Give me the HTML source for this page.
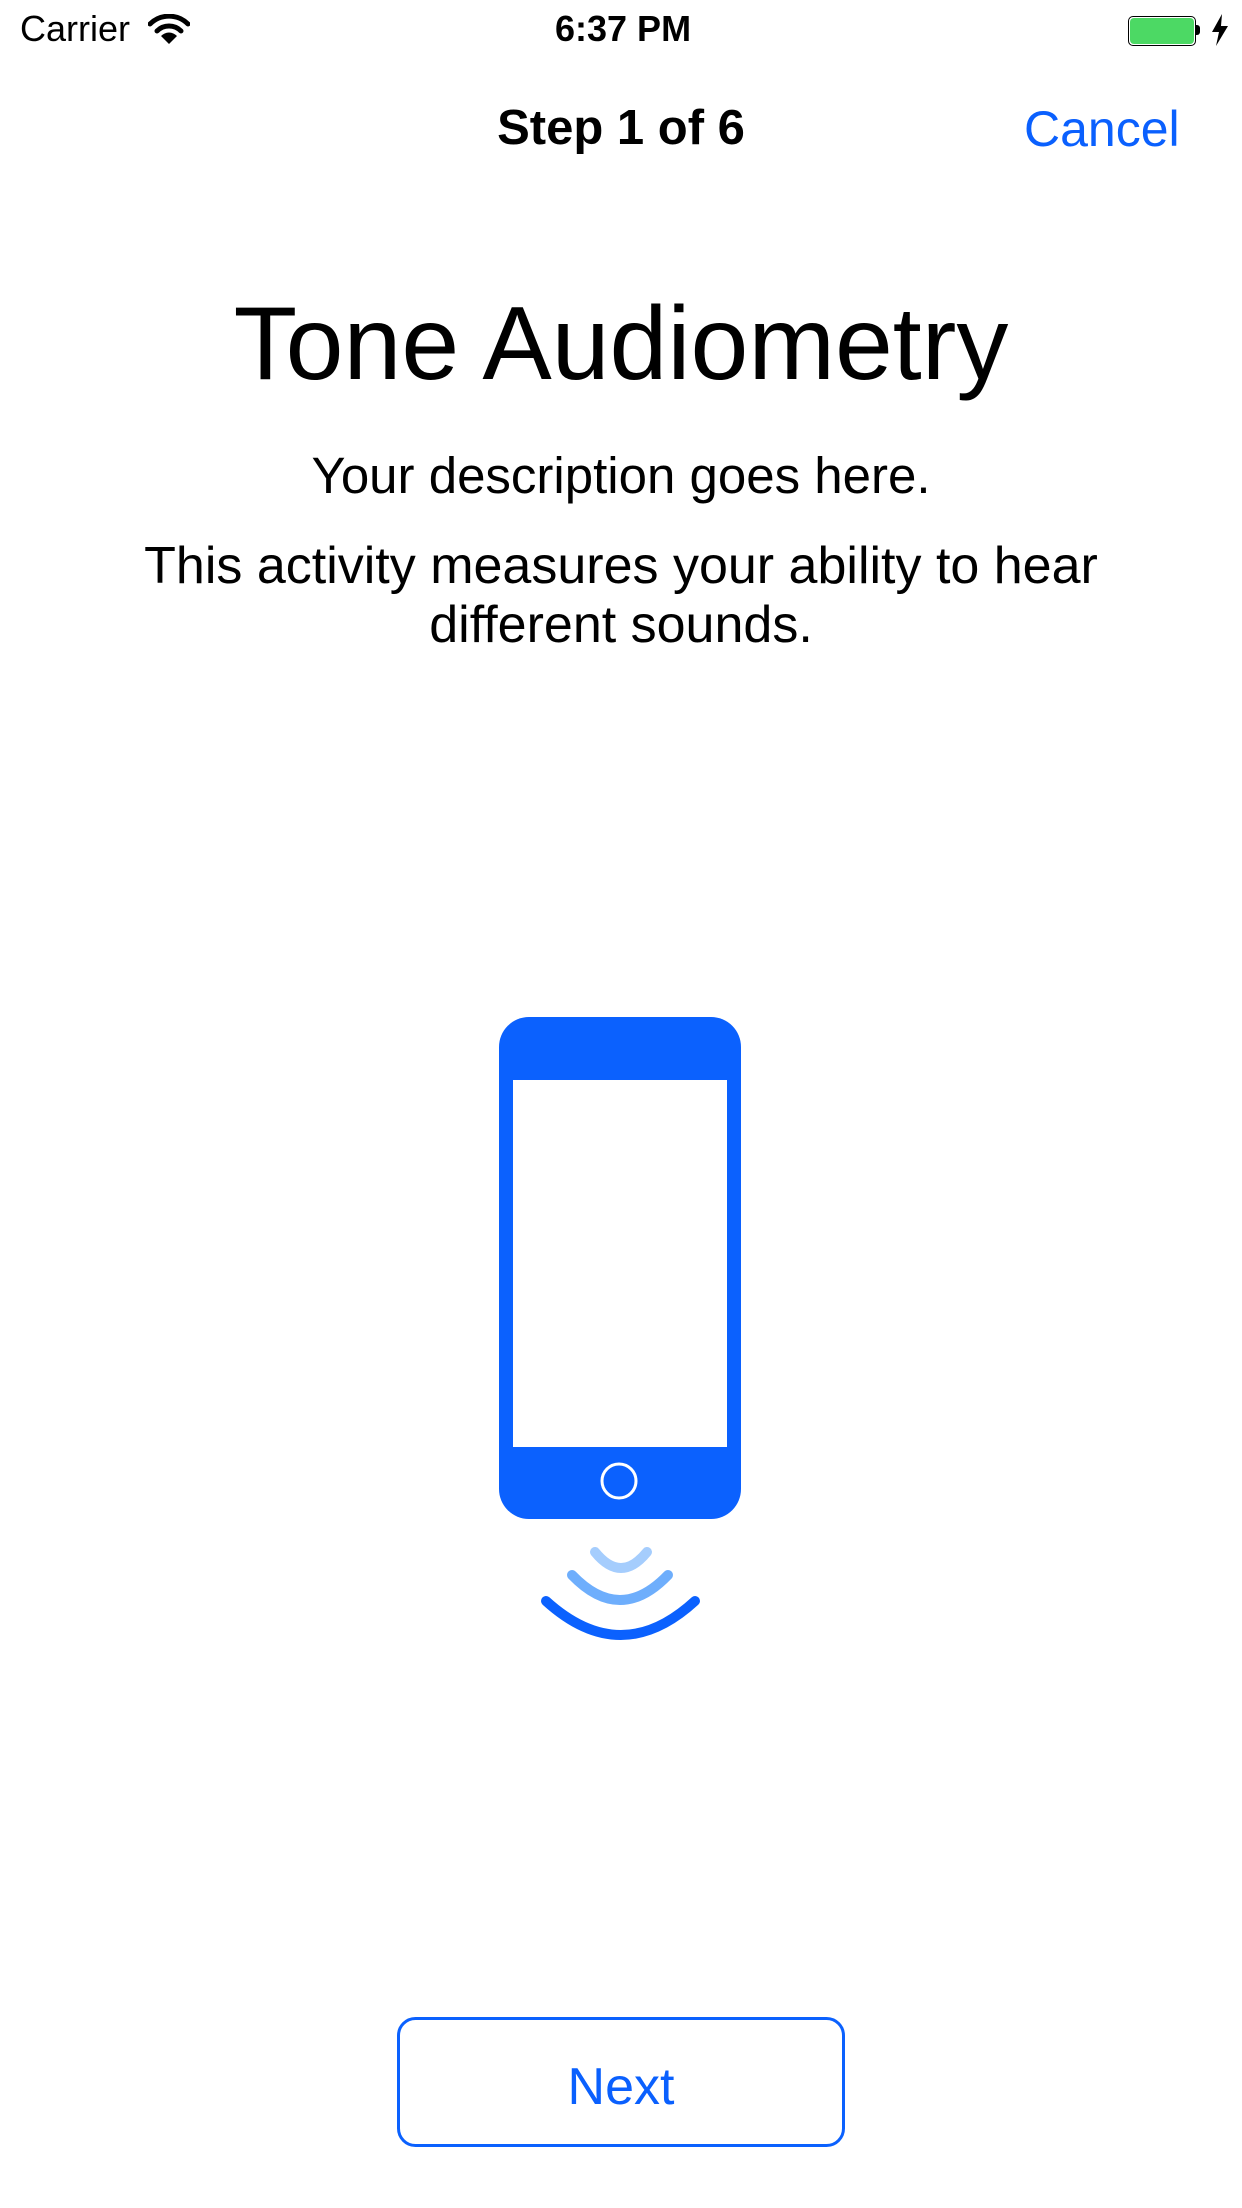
<!DOCTYPE html>
<html><head><meta charset="utf-8"><style>
html,body{margin:0;padding:0;background:#fff;}
body{width:1242px;height:2208px;position:relative;overflow:hidden;font-family:"Liberation Sans",sans-serif;color:#000;}
.t{position:absolute;white-space:nowrap;line-height:1;}
</style></head><body>
<div class="t" style="left:20px;top:11px;font-size:36px;">Carrier</div>
<svg style="position:absolute;left:148px;top:14px" width="42" height="32" viewBox="0 0 42 32">
<path d="M2 10 A27 27 0 0 1 40 10" stroke="#000" stroke-width="5" fill="none" stroke-linecap="round"/>
<path d="M9 17 A17 17 0 0 1 33 17" stroke="#000" stroke-width="5" fill="none" stroke-linecap="round"/>
<path d="M13 22 L21 30 L29 22 A11 11 0 0 0 13 22 Z" fill="#000"/>
</svg>
<div class="t" style="left:555px;top:11px;font-size:36px;font-weight:bold;">6:37 PM</div>
<div style="position:absolute;left:1128px;top:16px;width:64px;height:26px;border:1px solid #000;border-radius:5px;padding:1px;box-sizing:content-box;">
<div style="width:64px;height:26px;background:#4cd964;border-radius:4px;"></div></div>
<div style="position:absolute;left:1196px;top:25px;width:4px;height:10px;background:#000;border-radius:0 3px 3px 0;"></div>
<svg style="position:absolute;left:1210px;top:14px" width="20" height="32" viewBox="0 0 20 32"><path d="M12 0 L2 18 L9 18 L6 32 L18 12 L11 12 Z" fill="#000"/></svg>
<div class="t" style="left:0;width:1242px;text-align:center;top:104px;font-size:49px;font-weight:bold;">Step 1 of 6</div>
<div class="t" style="left:1024px;top:104px;font-size:50px;color:#0a60fe;">Cancel</div>
<div class="t" style="left:0;width:1242px;text-align:center;top:292px;font-size:104px;">Tone Audiometry</div>
<div class="t" style="left:0;width:1242px;text-align:center;top:450px;font-size:51px;">Your description goes here.</div>
<div class="t" style="left:0;width:1242px;text-align:center;top:537px;font-size:52px;line-height:59px;">This activity measures your ability to hear<br>different sounds.</div>
<svg style="position:absolute;left:0;top:0" width="1242" height="2208">
<rect x="499" y="1017" width="242" height="502" rx="30" fill="#0b61fe"/>
<rect x="513" y="1080" width="214" height="367" fill="#fff"/>
<circle cx="619" cy="1481" r="17" fill="none" stroke="#fff" stroke-width="3"/>
<path d="M595 1552 Q621 1584 647 1552" stroke="#a5cdfd" stroke-width="10" fill="none" stroke-linecap="round"/>
<path d="M572 1575 Q620 1625 668 1575" stroke="#6eaefc" stroke-width="10" fill="none" stroke-linecap="round"/>
<path d="M546 1601 Q621 1669 695 1601" stroke="#0b61fe" stroke-width="10" fill="none" stroke-linecap="round"/>
<rect x="398.5" y="2018.5" width="445" height="127" rx="17" fill="none" stroke="#0b61fe" stroke-width="3"/>
</svg>
<div class="t" style="left:0;width:1242px;text-align:center;top:2061px;font-size:52px;color:#0a60fe;">Next</div>
</body></html>
